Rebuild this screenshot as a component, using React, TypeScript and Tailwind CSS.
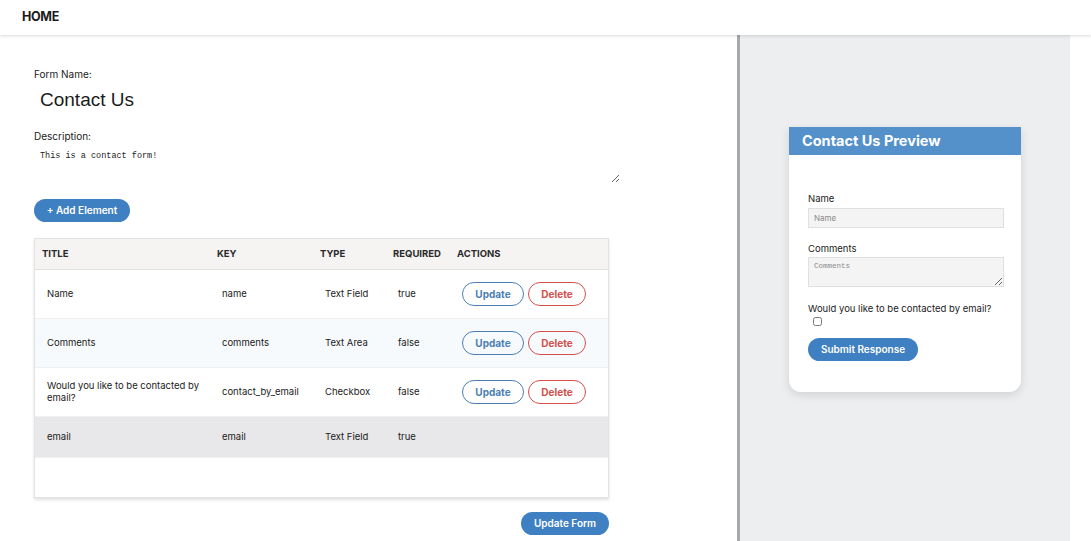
import React from "react";

type Row = { title: string; key: string; type: string; required: string; actions: boolean; bg: string };

const rows: Row[] = [
  { title: "Name", key: "name", type: "Text Field", required: "true", actions: true, bg: "bg-white" },
  { title: "Comments", key: "comments", type: "Text Area", required: "false", actions: true, bg: "bg-[#f7fafd]" },
  { title: "Would you like to be contacted by email?", key: "contact_by_email", type: "Checkbox", required: "false", actions: true, bg: "bg-white" },
  { title: "email", key: "email", type: "Text Field", required: "true", actions: false, bg: "bg-[#e8e7e9]" },
];

const cols = "grid grid-cols-[175px_103px_73px_64px_1fr]";

const App: React.FC = () => {
  return (
    <div className="w-[1091px] h-[541px] overflow-hidden bg-white text-[#1b1b1b] font-['Inter',sans-serif] flex flex-col">
      <header className="h-[35px] shrink-0 flex items-center px-[22px] bg-white shadow-[0_1px_3px_rgba(0,0,0,0.15)] relative z-10">
        <span className="text-[12.5px] font-bold tracking-tight">HOME</span>
      </header>

      <div className="flex flex-1">
        {/* editor */}
        <div className="w-[737px] shrink-0 pl-[34px] pt-[34px]">
          <div className="text-[10px] leading-none">Form Name:</div>
          <input
            className="block mt-[10px] ml-[6px] text-[19px] font-['Liberation_Sans',sans-serif] outline-none w-[500px] leading-none"
            defaultValue="Contact Us"
          />
          <div className="text-[10px] leading-none mt-[20px]">Description:</div>
          <textarea
            className="block mt-[6px] w-[586px] h-[36px] pl-[6px] pt-[3px] text-[8.5px] font-['Liberation_Mono',monospace] outline-none resize-y"
            defaultValue="This is a contact form!"
          />
          <button className="mt-[16px] h-[23px] w-[96px] rounded-full bg-[#3e80c2] text-white text-[10px] font-semibold">
            + Add Element
          </button>

          <div className="mt-[16px] w-[575px] h-[260px] border border-[#e2e2e2] shadow-[0_2px_3px_rgba(0,0,0,0.12)] flex flex-col">
            <div className={`${cols} h-[31px] items-center bg-[#f5f4f3] border-b border-[#e2e2e2] text-[9.5px] font-bold text-[#2a2a2a]`}>
              <div className="pl-[7px]">TITLE</div>
              <div className="pl-[7px]">KEY</div>
              <div className="pl-[7px]">TYPE</div>
              <div className="pl-[7px]">REQUIRED</div>
              <div className="pl-[7px]">ACTIONS</div>
            </div>
            {rows.map((r) => (
              <div
                key={r.key}
                className={`${cols} ${r.actions ? "h-[49px]" : "h-[41px]"} items-center ${r.bg} border-b border-[#f0f0f0] text-[9.5px] leading-[12px]`}
              >
                <div className="pl-[12px] pr-[4px]">{r.title}</div>
                <div className="pl-[12px]">{r.key}</div>
                <div className="pl-[12px]">{r.type}</div>
                <div className="pl-[12px]">{r.required}</div>
                <div className="pl-[12px] flex gap-[4px]">
                  {r.actions && (
                    <>
                      <button className="h-[24px] w-[62px] rounded-full border border-[#4b7fb5] text-[#4b7fb5] text-[10px] font-bold">
                        Update
                      </button>
                      <button className="h-[24px] w-[58px] rounded-full border border-[#d3504b] text-[#d3504b] text-[10px] font-bold">
                        Delete
                      </button>
                    </>
                  )}
                </div>
              </div>
            ))}
          </div>

          <div className="w-[575px] flex justify-end mt-[14px]">
            <button className="h-[23px] w-[88px] rounded-full bg-[#3e80c2] text-white text-[10px] font-semibold">
              Update Form
            </button>
          </div>
        </div>

        <div className="w-[3px] bg-[#a9a9a9]" />

        {/* preview */}
        <div className="w-[330px] bg-[#eceef0] pt-[92px] pl-[49px]">
          <div className="w-[232px] h-[265px] bg-white rounded-b-[12px] shadow-[0_3px_10px_rgba(0,0,0,0.12)]">
            <div className="h-[28px] bg-[#5490ca] flex items-center px-[13px] text-white text-[14.5px] font-bold">
              Contact Us Preview
            </div>
            <div className="px-[19px] pt-[39px]">
              <div className="text-[9.5px] leading-none">Name</div>
              <input
                className="block mt-[4px] w-[196px] h-[20px] bg-[#f4f4f4] border border-[#e0e0e0] px-[5px] text-[8px] placeholder:text-[#8a8a8a] outline-none"
                placeholder="Name"
              />
              <div className="text-[9.5px] leading-none mt-[16px]">Comments</div>
              <textarea
                className="block mt-[4px] w-[196px] h-[30px] bg-[#f4f4f4] border border-[#e0e0e0] px-[5px] pt-[3px] text-[7.5px] font-['Liberation_Mono',monospace] placeholder:text-[#8a8a8a] outline-none"
                placeholder="Comments"
              />
              <div className="text-[9.5px] leading-none mt-[17px]">Would you like to be contacted by email?</div>
              <input type="checkbox" className="block mt-[3px] ml-[5px] w-[9px] h-[9px]" />
              <button className="mt-[12px] h-[23px] w-[110px] rounded-full bg-[#3e80c2] text-white text-[10px] font-semibold">
                Submit Response
              </button>
            </div>
          </div>
        </div>

        <div className="flex-1 bg-white" />
      </div>
    </div>
  );
};

export default App;
